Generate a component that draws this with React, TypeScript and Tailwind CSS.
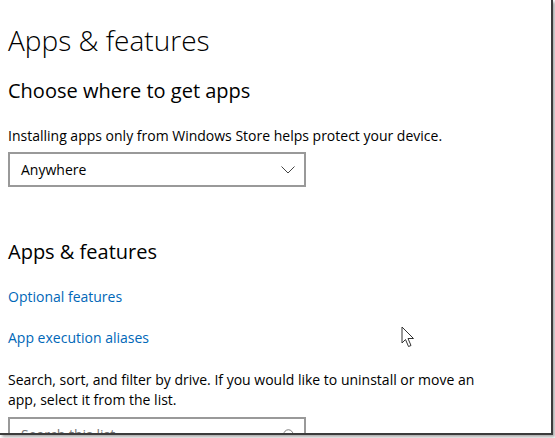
import { Search } from 'lucide-react';

const font = { fontFamily: '"Open Sans", "Noto Sans", sans-serif' };

function Cursor() {
  return (
    <svg
      className="absolute left-[401px] top-[326px]"
      width="15"
      height="22"
      viewBox="0 0 15 22"
    >
      <path
        d="M1 1 L1 17 L4.5 13.5 L7.5 20.5 L10 19.5 L7 12.5 L12.5 12.5 Z"
        fill="white"
        stroke="#333"
        strokeWidth="1"
        strokeLinejoin="round"
      />
    </svg>
  );
}

function Chevron() {
  return (
    <svg width="14" height="8" viewBox="0 0 14 8" className="mr-[1px]">
      <polyline points="0.5,0.5 7,7 13.5,0.5" fill="none" stroke="#444" strokeWidth="1" />
    </svg>
  );
}

export default function App() {
  return (
    <div className="w-[555px] h-[438px] bg-white relative overflow-hidden" style={font}>
      <div className="w-[553px] h-[435px] bg-white border-r-2 border-b-2 border-[#3c3c3c] shadow-[2px_2px_3px_rgba(0,0,0,0.35)] overflow-hidden relative">
        <div className="pl-2 pt-[20px] text-black">
          <h1 className="text-[28px] font-light leading-[40px]">Apps &amp; features</h1>
          <h2 className="mt-[17px] text-[20px] leading-[28px]">Choose where to get apps</h2>

          <p className="mt-[21px] text-[14px] leading-[20px]">
            Installing apps only from Windows Store helps protect your device.
          </p>

          <div className="mt-[6px] w-[298px] h-[35px] border-2 border-[#999999] flex items-center justify-between pl-[11px] pr-[8px]">
            <span className="text-[14px]">Anywhere</span>
            <Chevron />
          </div>

          <h2 className="mt-[51px] text-[20px] leading-[28px]">Apps &amp; features</h2>

          <div className="mt-[21px] flex flex-col gap-[21px]">
            <a className="text-[14px] leading-[20px] text-[#0067b8]">Optional features</a>
            <a className="text-[14px] leading-[20px] text-[#0067b8]">App execution aliases</a>
          </div>

          <p className="mt-[22px] w-[480px] text-[14px] leading-[20px]">
            Search, sort, and filter by drive. If you would like to uninstall or move an app, select it from the list.
          </p>

          <div className="mt-[7px] w-[298px] h-[35px] border-2 border-[#999999] flex items-center justify-between pl-[11px] pr-[8px]">
            <span className="text-[14px] text-[#767676]">Search this list</span>
            <Search className="w-[14px] h-[14px] text-[#555]" strokeWidth={1.3} />
          </div>
        </div>
        <Cursor />
      </div>
    </div>
  );
}
